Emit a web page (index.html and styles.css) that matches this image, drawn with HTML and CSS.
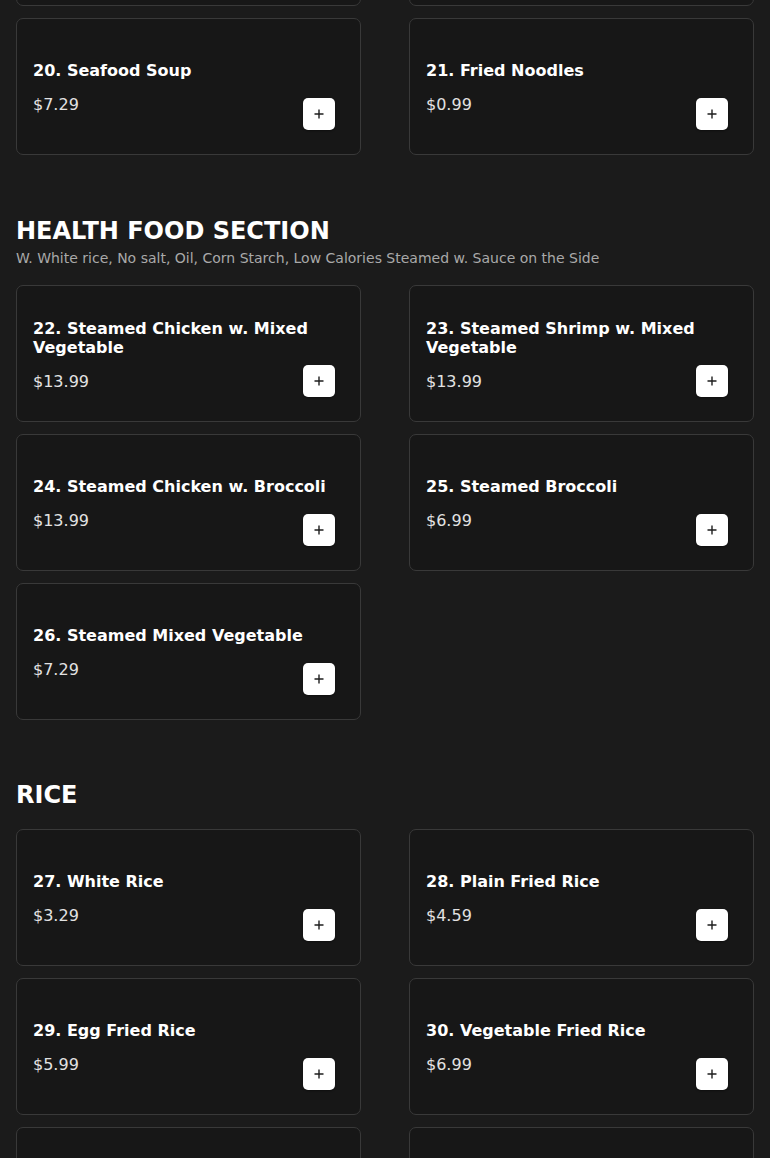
FILE: index.html
```html
<!DOCTYPE html>
<html lang="en">
<head>
<meta charset="utf-8">
<title>Menu</title>
<link rel="stylesheet" href="styles.css">
</head>
<body>
<main class="menu">
  <section class="section section-partial">
    <div class="grid">
      <div class="card"><div class="info"><h3 class="name">18. Hot &amp; Sour Soup</h3><p class="price">$3.99</p></div><button class="add" aria-label="Add"><svg viewBox="0 0 12 12" width="12" height="12"><path d="M6 1.5v9M1.5 6h9" stroke="#1e1e1e" stroke-width="1.4" fill="none"/></svg></button></div>
      <div class="card"><div class="info"><h3 class="name">19. Wonton Egg Drop Soup</h3><p class="price">$3.99</p></div><button class="add" aria-label="Add"><svg viewBox="0 0 12 12" width="12" height="12"><path d="M6 1.5v9M1.5 6h9" stroke="#1e1e1e" stroke-width="1.4" fill="none"/></svg></button></div>
      <div class="card"><div class="info"><h3 class="name">20. Seafood Soup</h3><p class="price">$7.29</p></div><button class="add" aria-label="Add"><svg viewBox="0 0 12 12" width="12" height="12"><path d="M6 1.5v9M1.5 6h9" stroke="#1e1e1e" stroke-width="1.4" fill="none"/></svg></button></div>
      <div class="card"><div class="info"><h3 class="name">21. Fried Noodles</h3><p class="price">$0.99</p></div><button class="add" aria-label="Add"><svg viewBox="0 0 12 12" width="12" height="12"><path d="M6 1.5v9M1.5 6h9" stroke="#1e1e1e" stroke-width="1.4" fill="none"/></svg></button></div>
    </div>
  </section>

  <section class="section">
    <header class="section-head">
      <h2 class="section-title">HEALTH FOOD SECTION</h2>
      <p class="section-sub">W. White rice, No salt, Oil, Corn Starch, Low Calories Steamed w. Sauce on the Side</p>
    </header>
    <div class="grid">
      <div class="card"><div class="info"><h3 class="name">22. Steamed Chicken w. Mixed Vegetable</h3><p class="price">$13.99</p></div><button class="add" aria-label="Add"><svg viewBox="0 0 12 12" width="12" height="12"><path d="M6 1.5v9M1.5 6h9" stroke="#1e1e1e" stroke-width="1.4" fill="none"/></svg></button></div>
      <div class="card"><div class="info"><h3 class="name">23. Steamed Shrimp w. Mixed Vegetable</h3><p class="price">$13.99</p></div><button class="add" aria-label="Add"><svg viewBox="0 0 12 12" width="12" height="12"><path d="M6 1.5v9M1.5 6h9" stroke="#1e1e1e" stroke-width="1.4" fill="none"/></svg></button></div>
      <div class="card"><div class="info"><h3 class="name">24. Steamed Chicken w. Broccoli</h3><p class="price">$13.99</p></div><button class="add" aria-label="Add"><svg viewBox="0 0 12 12" width="12" height="12"><path d="M6 1.5v9M1.5 6h9" stroke="#1e1e1e" stroke-width="1.4" fill="none"/></svg></button></div>
      <div class="card"><div class="info"><h3 class="name">25. Steamed Broccoli</h3><p class="price">$6.99</p></div><button class="add" aria-label="Add"><svg viewBox="0 0 12 12" width="12" height="12"><path d="M6 1.5v9M1.5 6h9" stroke="#1e1e1e" stroke-width="1.4" fill="none"/></svg></button></div>
      <div class="card"><div class="info"><h3 class="name">26. Steamed Mixed Vegetable</h3><p class="price">$7.29</p></div><button class="add" aria-label="Add"><svg viewBox="0 0 12 12" width="12" height="12"><path d="M6 1.5v9M1.5 6h9" stroke="#1e1e1e" stroke-width="1.4" fill="none"/></svg></button></div>
    </div>
  </section>

  <section class="section">
    <header class="section-head section-head-plain">
      <h2 class="section-title">RICE</h2>
    </header>
    <div class="grid">
      <div class="card"><div class="info"><h3 class="name">27. White Rice</h3><p class="price">$3.29</p></div><button class="add" aria-label="Add"><svg viewBox="0 0 12 12" width="12" height="12"><path d="M6 1.5v9M1.5 6h9" stroke="#1e1e1e" stroke-width="1.4" fill="none"/></svg></button></div>
      <div class="card"><div class="info"><h3 class="name">28. Plain Fried Rice</h3><p class="price">$4.59</p></div><button class="add" aria-label="Add"><svg viewBox="0 0 12 12" width="12" height="12"><path d="M6 1.5v9M1.5 6h9" stroke="#1e1e1e" stroke-width="1.4" fill="none"/></svg></button></div>
      <div class="card"><div class="info"><h3 class="name">29. Egg Fried Rice</h3><p class="price">$5.99</p></div><button class="add" aria-label="Add"><svg viewBox="0 0 12 12" width="12" height="12"><path d="M6 1.5v9M1.5 6h9" stroke="#1e1e1e" stroke-width="1.4" fill="none"/></svg></button></div>
      <div class="card"><div class="info"><h3 class="name">30. Vegetable Fried Rice</h3><p class="price">$6.99</p></div><button class="add" aria-label="Add"><svg viewBox="0 0 12 12" width="12" height="12"><path d="M6 1.5v9M1.5 6h9" stroke="#1e1e1e" stroke-width="1.4" fill="none"/></svg></button></div>
      <div class="card"><div class="info"><h3 class="name">31. Chicken Fried Rice</h3><p class="price">$7.29</p></div><button class="add" aria-label="Add"><svg viewBox="0 0 12 12" width="12" height="12"><path d="M6 1.5v9M1.5 6h9" stroke="#1e1e1e" stroke-width="1.4" fill="none"/></svg></button></div>
      <div class="card"><div class="info"><h3 class="name">32. Pork Fried Rice</h3><p class="price">$7.29</p></div><button class="add" aria-label="Add"><svg viewBox="0 0 12 12" width="12" height="12"><path d="M6 1.5v9M1.5 6h9" stroke="#1e1e1e" stroke-width="1.4" fill="none"/></svg></button></div>
    </div>
  </section>
</main>
</body>
</html>
```

FILE: styles.css
```css
html, body {
  margin: 0;
  padding: 0;
  background: #1b1b1b;
  color: #ffffff;
  font-family: "DejaVu Sans", "Liberation Sans", sans-serif;
  overflow: hidden;
}

.menu {
  padding: 0 16px;
  margin-top: -131px;
  display: flex;
  flex-direction: column;
  gap: 62px;
}

.section-head {
  margin-bottom: 19px;
}

.section-head-plain {
  margin-top: -1px;
  margin-bottom: 20px;
}

.section-title {
  margin: 0;
  font-size: 24px;
  line-height: 28px;
  font-weight: bold;
  color: #ffffff;
}

.section-sub {
  margin: 5px 0 0;
  font-size: 14px;
  line-height: 16px;
  color: #a9a9a9;
}

.grid {
  display: grid;
  grid-template-columns: 1fr 1fr;
  column-gap: 48px;
  row-gap: 12px;
}

.card {
  box-sizing: border-box;
  height: 137px;
  padding: 17px 16px 15px;
  display: grid;
  grid-template-columns: 1fr;
  grid-template-rows: 1fr;
  background: #171717;
  border: 1px solid #393939;
  border-radius: 7px;
}

.info,
.add {
  grid-area: 1 / 1;
}

.info {
  min-width: 0;
  display: flex;
  flex-direction: column;
  justify-content: center;
}

.name {
  margin: 0;
  font-size: 16px;
  line-height: 19px;
  font-weight: bold;
  color: #ffffff;
}

.price {
  margin: 15px 0 0;
  font-size: 16px;
  line-height: 19px;
  color: #e2e2e2;
}

.add {
  justify-self: end;
  align-self: end;
  width: 32px;
  height: 32px;
  margin: 0 9px 9px 0;
  padding: 0;
  border: none;
  border-radius: 5px;
  background: #ffffff;
  display: flex;
  align-items: center;
  justify-content: center;
  box-shadow: 0 1px 2px rgba(0, 0, 0, 0.4);
}
```
